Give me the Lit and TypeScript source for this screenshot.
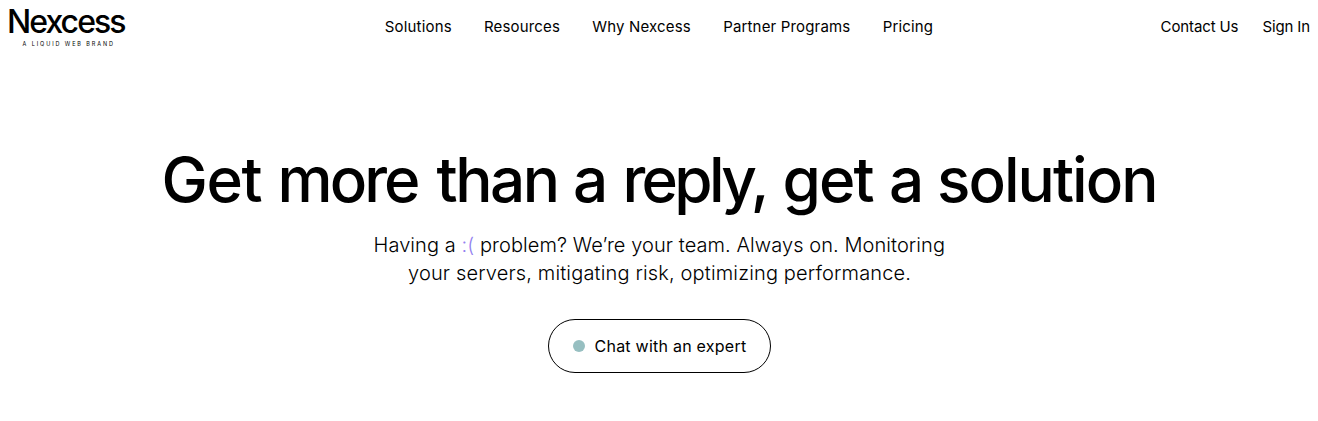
import { LitElement, html, css, svg } from "lit";
import { customElement } from "lit/decorators.js";

const headline: [string, number, number][] = [
  ["Get", 161.5, 101], ["more", 277.5, 143], ["than", 436.5, 123.5], ["a", 573, 35],
  ["reply,", 622.5, 147], ["get", 782.5, 92], ["a", 889, 35], ["solution", 937, 221.5],
];

@customElement("app-root")
export class AppRoot extends LitElement {
  static styles = css`
    :host { display: block; height: 421px; background: #fff; color: #000; font-family: Inter, "Liberation Sans", sans-serif; overflow: hidden; }
    header { display: grid; grid-template-columns: 1fr auto 1fr; height: 54px; padding: 0 8px; align-items: center; font-size: 15px; font-weight: 430; }
    nav { display: flex; gap: 32.2px; letter-spacing: 0.17px; padding-bottom: 2px; }
    .account { display: flex; gap: 24px; justify-content: flex-end; letter-spacing: -0.12px; padding-bottom: 2px; }
    .brand { width: 118px; height: 54px; display: block; overflow: visible; }
    .word { font-size: 32px; font-weight: 480; }
    .tag { font-size: 5.5px; font-weight: 400; }
    .hero { display: flex; flex-direction: column; align-items: center; padding-top: 94px; }
    .line { display: block; overflow: visible; }
    .title { width: 1000px; height: 80px; }
    .head { font-size: 62px; font-weight: 470; }
    .copy { width: 580px; height: 64px; font-size: 20px; font-weight: 330; }
    .sad { fill: #9381f0; }
    .chat { box-sizing: border-box; display: flex; align-items: center; gap: 10px; width: 223px; height: 54px; margin-top: 27px; border: 1px solid #000; border-radius: 27px; padding: 0 24px; font: 440 16px Inter, sans-serif; letter-spacing: 0.24px; background: #fff; color: #000; white-space: nowrap; }
    .dot { width: 12px; height: 12px; flex: none; border-radius: 50%; background: #97bfc1; }
    a { color: inherit; text-decoration: none; white-space: nowrap; }
  `;
  render() {
    return html`
      <header>
        <svg class="brand" viewBox="8 0 118 54"><text class="word" x="7" y="32.5" textLength="119.5" lengthAdjust="spacing">Nexcess</text><text class="tag" x="22.5" y="46" textLength="90.5">A LIQUID WEB BRAND</text></svg>
        <nav><a>Solutions</a><a>Resources</a><a>Why Nexcess</a><a>Partner Programs</a><a>Pricing</a></nav>
        <div class="account"><a>Contact Us</a><a>Sign In</a></div>
      </header>
      <main class="hero">
        <svg class="line title" viewBox="159 148 1000 80">${headline.map(([word, x, width]) => svg`<text class="head" x=${x} y="202" textLength=${width}>${word}</text>`)}</svg>
        <svg class="line copy" viewBox="369 228 580 64"><text x="373.5" y="252" textLength="571.5">Having a <tspan class="sad">:(</tspan> problem? We’re your team. Always on. Monitoring</text><text x="408" y="280" textLength="503">your servers, mitigating risk, optimizing performance.</text></svg>
        <button class="chat"><span class="dot"></span><span>Chat with an expert</span></button>
      </main>`;
  }
}
